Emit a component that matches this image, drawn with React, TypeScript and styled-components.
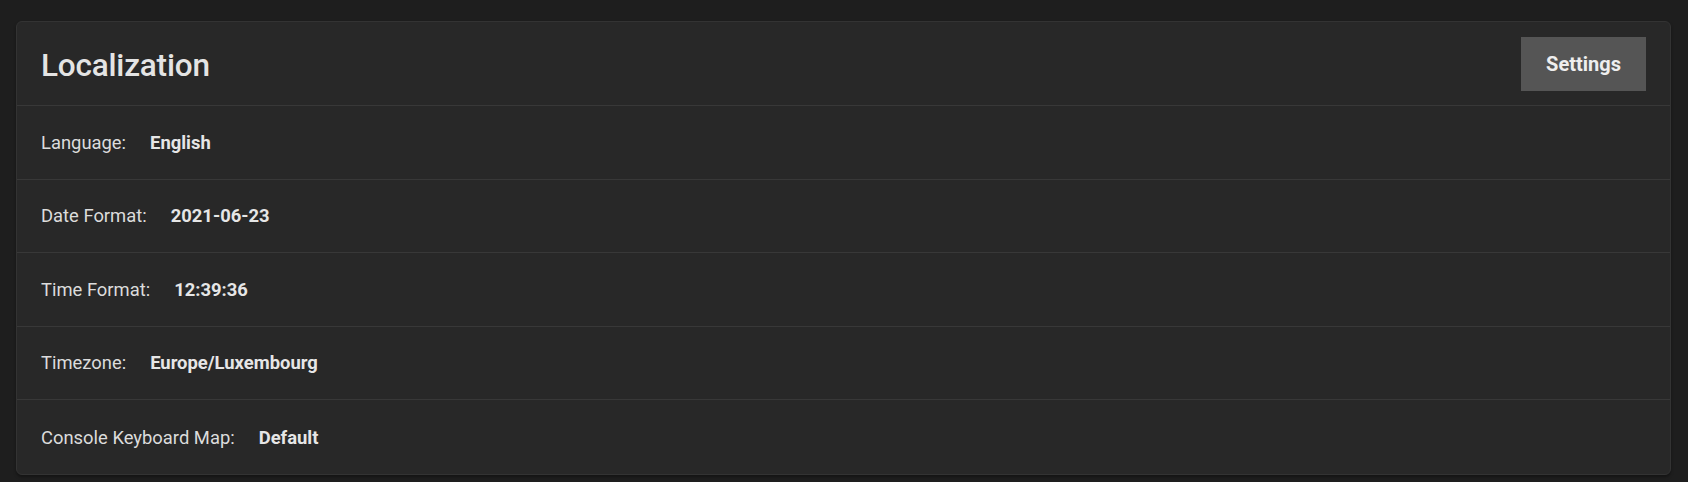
import React from "react";
import styled, { createGlobalStyle } from "styled-components";

const Global = createGlobalStyle`
  html, body { margin: 0; padding: 0; background: #1e1e1e; }
  body { font-family: Roboto, "Noto Sans", "Liberation Sans", sans-serif; color: #e0e0e0; }
`;

const Page = styled.div`
  padding: 21px 17px 8px 16px;
  min-height: 482px;
  box-sizing: border-box;
`;

const Card = styled.section`
  background: #282828;
  border: 1px solid #333333;
  border-radius: 6px;
  box-shadow: 0 2px 3px rgba(0, 0, 0, 0.35);
  overflow: hidden;
`;

const Header = styled.header`
  display: flex;
  align-items: center;
  justify-content: space-between;
  height: 83px;
  padding: 0 24px 0 24px;
  border-bottom: 1px solid #383838;
`;

const Title = styled.h2`
  margin: 3px 0 0 0;
  font-size: 31.5px;
  font-weight: 500;
  color: #e4e4e4;
  letter-spacing: -0.2px;
`;

const Button = styled.button`
  width: 125px;
  height: 54px;
  border: none;
  border-radius: 0;
  background: #555555;
  color: #eeeeee;
  font-family: Roboto, "Noto Sans", sans-serif;
  font-size: 20px;
  font-weight: 700;
  cursor: pointer;
`;

const Row = styled.div<{ $last?: boolean }>`
  display: flex;
  align-items: center;
  gap: 24px;
  height: ${(p) => (p.$last ? 74 : 72.5)}px;
  padding: 0 24px;
  border-bottom: ${(p) => (p.$last ? "none" : "1px solid #383838")};
  font-size: 18.4px;
`;

const Label = styled.span`
  color: #dcdcdc;
  font-weight: 400;
`;

const Value = styled.span`
  color: #e6e6e6;
  font-weight: 700;
`;

const rows = [
  ["Language:", "English"],
  ["Date Format:", "2021-06-23"],
  ["Time Format:", "12:39:36"],
  ["Timezone:", "Europe/Luxembourg"],
  ["Console Keyboard Map:", "Default"],
];

export default function App() {
  return (
    <>
      <Global />
      <Page>
        <Card>
          <Header>
            <Title>Localization</Title>
            <Button>Settings</Button>
          </Header>
          {rows.map(([l, v], i) => (
            <Row key={l} $last={i === rows.length - 1}>
              <Label>{l}</Label>
              <Value>{v}</Value>
            </Row>
          ))}
        </Card>
      </Page>
    </>
  );
}
